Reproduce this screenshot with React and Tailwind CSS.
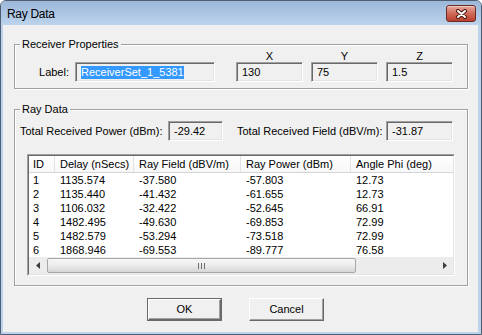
import React from 'react';

const rows = [
  ['1', '1135.574', '-37.580', '-57.803', '12.73'],
  ['2', '1135.440', '-41.432', '-61.655', '12.73'],
  ['3', '1106.032', '-32.422', '-52.645', '66.91'],
  ['4', '1482.495', '-49.630', '-69.853', '72.99'],
  ['5', '1482.579', '-53.294', '-73.518', '72.99'],
  ['6', '1868.946', '-69.553', '-89.777', '76.58'],
];

const cols = [
  { title: 'ID', w: 'w-[26px] pl-[4px]' },
  { title: 'Delay (nSecs)', w: 'w-[79px] pl-[5px]' },
  { title: 'Ray Field (dBV/m)', w: 'w-[107px] pl-[5px]' },
  { title: 'Ray Power (dBm)', w: 'w-[110px] pl-[5px]' },
  { title: 'Angle Phi (deg)', w: 'w-[110px] pl-[5px]' },
];

// sunken read-only edit box, classic 3d edge
function Field({ className, children }) {
  return (
    <div className={`h-[20px] shrink-0 border border-t-[#a0a0a0] border-l-[#a0a0a0] border-r-white border-b-white bg-[#f0f0f0] shadow-[inset_1px_1px_0_#696969,inset_-1px_-1px_0_#e3e3e3] flex items-center pl-[5px] whitespace-nowrap overflow-hidden ${className}`}>
      {children}
    </div>
  );
}

function Group({ title, className, children }) {
  return (
    <fieldset className={`border border-[#a0a0a0] shadow-[inset_1px_1px_0_#fff,1px_1px_0_#fff] ${className}`}>
      <legend className="ml-[5px] px-[2px] leading-[14px] bg-[#f0f0f0]">{title}</legend>
      {children}
    </fieldset>
  );
}

function Arrow({ dir }) {
  return (
    <div className="w-[17px] h-full flex items-center justify-center">
      <svg width="4" height="7" viewBox="0 0 4 7">
        {dir === 'left'
          ? <polygon points="4,0 0,3.5 4,7" fill="#3c3c3c" />
          : <polygon points="0,0 4,3.5 0,7" fill="#3c3c3c" />}
      </svg>
    </div>
  );
}

function Button({ label, isDefault }) {
  return (
    <div className={`w-[75px] h-[23px] ${isDefault ? 'border border-[#6a6a6a]' : ''}`}>
      <div className="h-full w-full flex items-center justify-center bg-[#f0f0f0] border border-t-white border-l-white border-r-[#696969] border-b-[#696969] shadow-[inset_-1px_-1px_0_#a0a0a0]">
        {label}
      </div>
    </div>
  );
}

export default function App() {
  return (
    <div className="w-[482px] h-[335px] font-['Liberation_Sans',Arial,sans-serif] text-[11px] text-black">
      <div className="flex h-full flex-col rounded-t-[6px] border border-[#4d5e73] bg-[#bcd3eb]">
        {/* title bar */}
        <div className="flex h-[24px] shrink-0 items-start justify-between rounded-t-[5px] bg-gradient-to-b from-[#9cb8d9] to-[#bcd3eb] pl-[6px] pr-[5px]">
          <div className="pt-[6px] text-[12px] leading-[15px] tracking-[-0.3px]">Ray Data</div>
          <div className="mt-[4px] w-[30px] h-[17px] rounded-[3px] border border-[#6b2a26] bg-gradient-to-b from-[#e6aa9e] via-[#cf6a58] to-[#b93f2e] shadow-[inset_0_1px_0_#f1c9c0] flex items-center justify-center">
            <svg width="13" height="10" viewBox="0 0 13 10">
              <path d="M3 2 L10 8 M10 2 L3 8" stroke="#4a1712" strokeWidth="4" strokeLinecap="round" />
              <path d="M3 2 L10 8 M10 2 L3 8" stroke="#fff" strokeWidth="2" strokeLinecap="round" />
            </svg>
          </div>
        </div>

        {/* client area */}
        <div className="ml-[2px] mr-[3px] mb-[2px] flex-1 bg-[#f0f0f0] flex flex-col">
          <Group title="Receiver Properties" className="mt-[12px] ml-[11px] mr-[10px]">
            <div className="flex items-end pb-[6px]">
              <div className="w-[60px] h-[20px] flex items-center justify-end pr-[6px]">Label:</div>
              <Field className="w-[140px] pl-[4px]">
                <span className="bg-[#3399ff] text-white leading-[13px]">ReceiverSet_1_5381</span>
              </Field>
              <div className="ml-[21px] flex gap-[8px]">
                {[['X', '130'], ['Y', '75'], ['Z', '1.5']].map(([k, v]) => (
                  <div key={k} className="w-[67px] flex flex-col">
                    <div className="h-[11px] leading-[11px] text-center">{k}</div>
                    <Field className="w-[67px]">{v}</Field>
                  </div>
                ))}
              </div>
            </div>
          </Group>

          <Group title="Ray Data" className="mt-[13px] ml-[11px] mr-[10px]">
            <div className="pt-[5px] pb-[9px]">
              <div className="flex items-center pl-[5px]">
                <div className="w-[148px]">Total Received Power (dBm):</div>
                <Field className="w-[55px]">-29.42</Field>
                <div className="ml-[14px] w-[149px]">Total Received Field (dBV/m):</div>
                <Field className="w-[67px]">-31.87</Field>
              </div>

              <div className="mt-[13px] ml-[12px] w-[428px] h-[122px] border border-t-[#a0a0a0] border-l-[#a0a0a0] border-r-white border-b-white">
                <div className="h-full w-full border border-t-[#696969] border-l-[#696969] border-r-[#e3e3e3] border-b-[#e3e3e3] bg-white flex flex-col overflow-hidden">
                  <div className="h-[17px] shrink-0 flex border-b border-[#d5d5d5] bg-gradient-to-b from-white to-[#f6f7f8]">
                    {cols.map((c) => (
                      <div key={c.title} className={`${c.w} shrink-0 h-full border-r border-[#e2e3e5] leading-[16px] whitespace-nowrap`}>{c.title}</div>
                    ))}
                  </div>
                  <div className="flex-1">
                    {rows.map((r) => (
                      <div key={r[0]} className="flex h-[14px] leading-[14px]">
                        {r.map((v, i) => (
                          <div key={i} className={`${cols[i].w} shrink-0 whitespace-nowrap`}>{v}</div>
                        ))}
                      </div>
                    ))}
                  </div>
                  <div className="h-[17px] shrink-0 flex bg-[#ececec]">
                    <Arrow dir="left" />
                    <div className="flex-1 flex items-center">
                      <div className="ml-[1px] w-[309px] h-[15px] rounded-[2px] border border-[#a7a7a7] bg-gradient-to-b from-[#f7f7f7] via-[#ebebeb] to-[#d6d6d6] flex items-center justify-center gap-[2px]">
                        <div className="w-[1px] h-[6px] bg-[#6f6f6f]" />
                        <div className="w-[1px] h-[6px] bg-[#6f6f6f]" />
                        <div className="w-[1px] h-[6px] bg-[#6f6f6f]" />
                      </div>
                    </div>
                    <Arrow dir="right" />
                  </div>
                </div>
              </div>
            </div>
          </Group>

          <div className="mt-[12px] ml-[144px] flex gap-[27px]">
            <Button label="OK" isDefault />
            <Button label="Cancel" />
          </div>
        </div>
      </div>
    </div>
  );
}
